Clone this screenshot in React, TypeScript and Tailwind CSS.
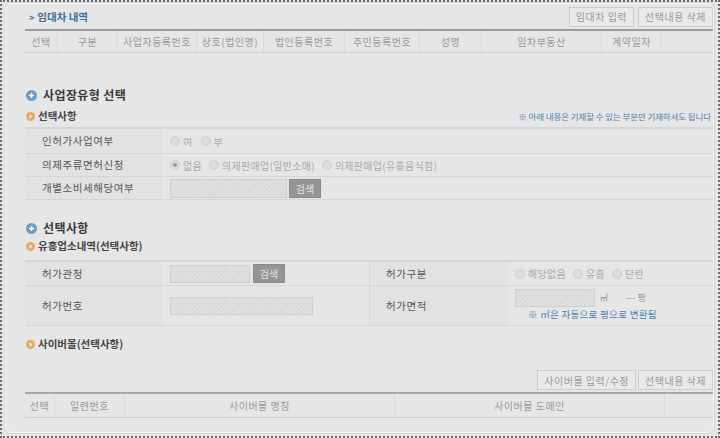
import React from "react";

const hatch =
  "bg-[repeating-linear-gradient(135deg,#e0e0e0_0px,#e0e0e0_2px,#d7d7d7_2px,#d7d7d7_3px)]";

function BlueIcon() {
  return (
    <span className="inline-flex h-[11px] w-[11px] items-center justify-center rounded-full bg-[#6f9cc4]">
      <svg width="7" height="7" viewBox="0 0 7 7">
        <path d="M3.5 1v5M1 3.5h5" stroke="#fff" strokeWidth="1.4" />
      </svg>
    </span>
  );
}

function OrangeIcon() {
  return (
    <span className="inline-flex h-[9px] w-[9px] items-center justify-center rounded-full bg-[#e5ab63]">
      <svg width="5" height="5" viewBox="0 0 5 5">
        <path d="M1.6 0.8l1.7 1.7-1.7 1.7" stroke="#fff" strokeWidth="1.1" fill="none" />
      </svg>
    </span>
  );
}

function Radio({ label, checked }: { label: string; checked?: boolean }) {
  return (
    <span className="flex items-center gap-[3px] text-[10px] tracking-[0.3px] text-[#aaaaaa]">
      <span className="flex h-[10px] w-[10px] items-center justify-center rounded-full border border-[#cfcfcf] bg-[#dcdcdc]">
        {checked ? <span className="h-[4px] w-[4px] rounded-full bg-[#9a9a9a]" /> : null}
      </span>
      <span>{label}</span>
    </span>
  );
}

function GrayButton({ children }: { children: React.ReactNode }) {
  return (
    <span className="flex h-[20px] items-center border border-[#cdcdcd] bg-[#e9e9e9] px-[6px] text-[10px] tracking-[0.5px] text-[#9a9a9a]">
      {children}
    </span>
  );
}

function SearchButton() {
  return (
    <span className="flex h-[19px] w-[32px] items-center justify-center border border-[#8a8a8a] bg-[#959595] text-[10px] text-[#e2e2e2]">
      검색
    </span>
  );
}

function Title({ text }: { text: string }) {
  return (
    <div className="flex h-[16px] items-center gap-[6px] pl-[1px] text-[12px] font-bold tracking-[0.4px] text-[#3a3a3a]">
      <BlueIcon />
      <span>{text}</span>
    </div>
  );
}

function SubTitle({ text }: { text: string }) {
  return (
    <div className="flex h-[14px] items-center gap-[3px] pl-[1px] text-[10.5px] font-bold text-[#444]">
      <OrangeIcon />
      <span>{text}</span>
    </div>
  );
}

const listCols = [
  { w: "w-[33px]", t: "선택" },
  { w: "w-[60px]", t: "구분" },
  { w: "w-[79px]", t: "사업자등록번호" },
  { w: "w-[67px]", t: "상호(법인명)" },
  { w: "w-[81px]", t: "법인등록번호" },
  { w: "w-[75px]", t: "주민등록번호" },
  { w: "w-[62px]", t: "성명" },
  { w: "w-[120px]", t: "임차부동산" },
  { w: "w-[60px]", t: "계약일자" },
  { w: "flex-1", t: "" },
];

const mallCols = [
  { w: "w-[30px]", t: "선택" },
  { w: "w-[70px]", t: "일련번호" },
  { w: "w-[270px]", t: "사이버몰 명칭" },
  { w: "w-[270px]", t: "사이버몰 도메인" },
  { w: "flex-1", t: "" },
];

function HeadRow({ cols, h }: { cols: { w: string; t: string }[]; h: string }) {
  return (
    <div className={`flex ${h} border-b border-[#cecece]`}>
      {cols.map((c, i) => (
        <div
          key={i}
          className={`${c.w} flex items-center justify-center text-[10px] tracking-[0.5px] text-[#999] ${
            i < cols.length - 1 ? "border-r border-[#dadada]" : ""
          }`}
        >
          {c.t}
        </div>
      ))}
    </div>
  );
}

const labelCls = "flex items-center bg-[#e2e2e2] text-[#555] tracking-[0.6px]";

export default function App() {
  return (
    <div className="h-[438px] w-[720px] overflow-hidden border-2 border-dotted border-[#6b6b6b] bg-[#e6e6e6] font-['Noto_Sans_CJK_KR','Noto_Sans',sans-serif]">
      <div className="ml-[3px] mt-[1px] h-[430px] w-[709px] overflow-hidden rounded-[6px] border border-[#f7f7f7] pl-[19px] shadow-[0_0_0_1px_#d2d2d2]">
        {/* 임대차 내역 */}
        <div className="flex h-[25px] items-center justify-between">
          <div className="pl-[4px] text-[10.5px] font-bold text-[#41709b]">
            <span className="mr-[3px] text-[9px]">&gt;</span>임대차 내역
          </div>
          <div className="flex gap-[4px]">
            <GrayButton>임대차 입력</GrayButton>
            <GrayButton>선택내용 삭제</GrayButton>
          </div>
        </div>
        <div className="border-t-2 border-[#9c9c9c]">
          <HeadRow cols={listCols} h="h-[22px]" />
        </div>

        <div className="h-[34px]" />

        {/* 사업장유형 선택 */}
        <Title text="사업장유형 선택" />
        <div className="mt-[6px] flex items-center">
          <SubTitle text="선택사항" />
          <span className="ml-auto whitespace-nowrap pr-[2px] text-[8.5px] tracking-[-0.1px] text-[#4d80ab]">
            ※ 아래 내용은 기재할 수 있는 부분만 기재하셔도 됩니다
          </span>
        </div>
        <div className="mt-[4px] border-t-2 border-[#d6d6d6] text-[10.5px]">
          <div className="flex h-[25px] border-b border-[#d6d6d6]">
            <div className={`${labelCls} w-[137px] pl-[17px]`}>인허가사업여부</div>
            <div className="flex items-center gap-[8px] pl-[8px]">
              <Radio label="여" />
              <Radio label="부" />
            </div>
          </div>
          <div className="flex h-[23px] border-b border-[#d6d6d6]">
            <div className={`${labelCls} w-[137px] pl-[17px]`}>의제주류면허신청</div>
            <div className="flex items-center gap-[7px] pl-[8px]">
              <Radio label="없음" checked />
              <Radio label="의제판매업(일반소매)" />
              <Radio label="의제판매업(유흥음식점)" />
            </div>
          </div>
          <div className="flex h-[23px] border-b border-[#d6d6d6]">
            <div className={`${labelCls} w-[137px] pl-[17px]`}>개별소비세해당여부</div>
            <div className="flex items-center gap-[2px] pl-[8px]">
              <span className={`h-[19px] w-[117px] border border-[#cfcfcf] ${hatch}`} />
              <SearchButton />
            </div>
          </div>
        </div>

        <div className="h-[20px]" />

        {/* 선택사항 */}
        <Title text="선택사항" />
        <div className="mt-[3px]">
          <SubTitle text="유흥업소내역(선택사항)" />
        </div>
        <div className="mt-[7px] border-t-2 border-[#d6d6d6] text-[10.5px]">
          <div className="flex h-[24px] border-b border-[#d6d6d6]">
            <div className={`${labelCls} w-[137px] pl-[17px]`}>허가관청</div>
            <div className="flex w-[208px] items-center gap-[3px] border-r border-[#d6d6d6] pl-[8px]">
              <span className={`h-[18px] w-[80px] border border-[#cfcfcf] ${hatch}`} />
              <SearchButton />
            </div>
            <div className={`${labelCls} w-[138px] pl-[16px]`}>허가구분</div>
            <div className="flex items-center gap-[7px] pl-[7px]">
              <Radio label="해당없음" />
              <Radio label="유흥" />
              <Radio label="단란" />
            </div>
          </div>
          <div className="flex h-[40px] border-b border-[#d6d6d6]">
            <div className={`${labelCls} w-[137px] pl-[17px]`}>허가번호</div>
            <div className="flex w-[208px] items-center border-r border-[#d6d6d6] pl-[8px]">
              <span className={`h-[18px] w-[143px] border border-[#cfcfcf] ${hatch}`} />
            </div>
            <div className={`${labelCls} w-[138px] pl-[16px]`}>허가면적</div>
            <div className="flex flex-col pl-[7px] pt-[3px]">
              <div className="flex items-center">
                <span className={`h-[18px] w-[80px] border border-[#cfcfcf] ${hatch}`} />
                <span className="ml-[5px] text-[8px] text-[#888]">㎡</span>
                <span className="ml-[18px] text-[9px] text-[#999]">--- 평</span>
              </div>
              <span className="ml-[13px] mt-[1px] text-[9.5px] leading-[12px] tracking-[0.3px] text-[#4d80ab]">
                ※ ㎡은 자동으로 평으로 변환됨
              </span>
            </div>
          </div>
        </div>

        <div className="mt-[11px]">
          <SubTitle text="사이버몰(선택사항)" />
        </div>

        <div className="mt-[19px] flex justify-end gap-[2px]">
          <GrayButton>사이버몰 입력/수정</GrayButton>
          <GrayButton>선택내용 삭제</GrayButton>
        </div>
        <div className="mt-[2px] border-t-2 border-[#a6a6a6]">
          <HeadRow cols={mallCols} h="h-[24px]" />
        </div>
      </div>
    </div>
  );
}
